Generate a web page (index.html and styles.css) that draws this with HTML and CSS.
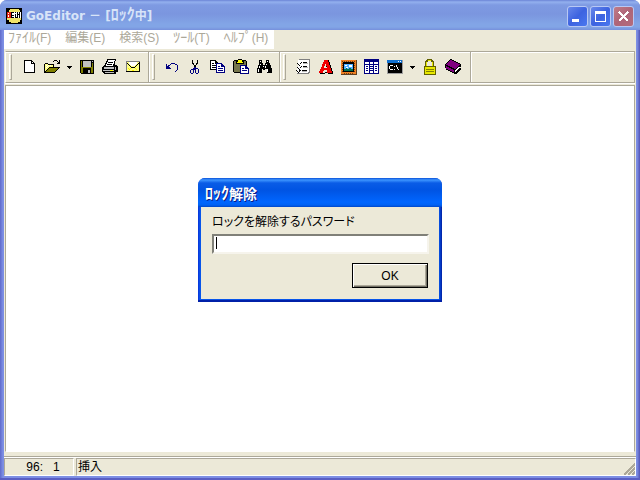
FILE: index.html
```html
<!DOCTYPE html>
<html lang="ja">
<head>
<meta charset="utf-8">
<title>GoEditor － [ﾛｯｸ中]</title>
<link rel="stylesheet" href="styles.css">
</head>
<body>
<div class="window">
  <header class="titlebar">
    <svg class="icon" viewBox="0 0 16 16"><path fill="#000" d="M0 0h16v16H0z"/><path fill="#f0e468" d="M4 1h9v1h1v2h1v8h-1v2h-2v1H5v-1H3v-2H1V4h2V2h1z"/><path fill="#fff" d="M5 4h10v6H5z"/><path fill="#e02010" d="M1 4h4v6H1z"/><path fill="#fff" d="M2 5h1v1H2zM2 7h1v2H2z"/><path fill="#000" d="M5 4h3v1H6v2h2v1H6v1h2v1H5zM9 6h1v4H9zM11 4h1v6h-1zM13 4h1v6h-1zM9 4h1v1H9zM10 9h1v1h-1zM12 6h1v1h-1z"/></svg>
    <h1 class="title">GoEditor － [<span class="kana">ﾛｯｸ</span>中]</h1>
    <div class="captions">
      <button class="caption" type="button" aria-label="最小化"><svg viewBox="0 0 19 19"><path fill="#fff" d="M4 12h7v3H4z"/></svg></button>
      <button class="caption" type="button" aria-label="最大化"><svg viewBox="0 0 19 19"><path fill="#fff" fill-rule="evenodd" d="M4 4h11v11H4zM5 7v7h9V7z"/></svg></button>
      <button class="caption caption-close" type="button" aria-label="閉じる"><svg viewBox="0 0 19 19"><path stroke="#fff" stroke-width="2.4" d="M5 5l9 9M14 5l-9 9"/></svg></button>
    </div>
  </header>
  <div class="client">
    <nav class="menubar">
      <button type="button"><span class="kana">ﾌｧｲﾙ</span>(F)</button>
      <button type="button">編集(E)</button>
      <button type="button">検索(S)</button>
      <button type="button"><span class="kana">ﾂｰﾙ</span>(T)</button>
      <button type="button"><span class="kana">ﾍﾙﾌﾟ</span>(H)</button>
    </nav>
    <div class="toolbar">
      <div class="band">
        <button class="tool" type="button" aria-label="新規"><svg class="icon" viewBox="0 0 16 16"><path fill="#000" d="M3 1h8v1h1v1h1v1h1v10H3z"/><path fill="#fff" d="M4 2h6v3h3v8H4z"/><path fill="#fff" d="M11 3h1v1h-1z"/></svg></button>
        <button class="tool" type="button" aria-label="開く"><svg class="icon" viewBox="0 0 16 16"><path fill="#000" d="M1 4h3v1h6v3h6v1h-1v1h-1v1h-1v1h-1v1h-1v1H0V5h1zM9 2h1V1h3v1h1v1h1V1h1v4h-3V4h1V3h-1V2h-3v1H9z"/><path fill="#ffff80" d="M1 5h3v1h5v2H5v1H4v1H3v1H2v1H1z"/><path fill="#fff" d="M2 6h1v1H2zM4 6h1v1H4zM6 6h1v1H6zM3 7h1v1H3zM2 8h1v1H2z"/><path fill="#808000" d="M5 9h9v1h-1v1h-1v1h-1v1H2v-1h1v-1h1v-1h1z"/></svg></button>
        <button class="drop" type="button" aria-label="履歴"><svg viewBox="0 0 5 3"><path d="M0 0h5v1H4v1H3v1H2V2H1V1H0z"/></svg></button>
        <button class="tool" type="button" aria-label="保存"><svg class="icon" viewBox="0 0 16 16"><path fill="#000" d="M1 1h14v14H2v-1H1z"/><path fill="#808000" d="M2 2h1v12H2zM13 4h1v10h-1zM3 8h10v1H3zM3 9h1v5H3zM12 8h1v6h-1z"/><path fill="#c0c0c0" d="M4 2h8v6H4zM13 2h1v1h-1zM9 11h2v3H9z"/></svg></button>
        <button class="tool" type="button" aria-label="印刷"><svg class="icon" viewBox="0 0 16 16"><path fill="#000" d="M5 0h9v2h-1v4h2v1h1v6h-2v2H2v-1H1v-1H0V8h1V7h1V6h1V4h1V2h1z"/><path fill="#fff" d="M6 1h7v1h-1v3h-1v2H4V5h1V3h1z"/><path fill="#000" d="M6 3h5v1H6zM5 5h5v1H5z"/><path fill="#c0c0c0" d="M2 8h10v2H2zM1 11h11v1H1zM13 8h1v3h-1zM3 13h9v1H3z"/><path fill="#ffff00" d="M8 11h3v1H8z"/></svg></button>
        <button class="tool" type="button" aria-label="メール"><svg class="icon" viewBox="0 0 16 16"><path fill="#808080" d="M1 2h14v1H2v9H1z"/><path fill="#000" d="M14 3h1v10H1v-1h13z"/><path fill="#ffff80" d="M2 3h12v9H2z"/><path fill="#fff" d="M4 3h8v2h-1v1h-1v1H6V6H5V5H4z"/><path fill="#000" d="M2 4h1v1H2zM3 5h1v1H3zM4 6h1v1H4zM5 7h1v1H5zM6 8h4v1H6zM10 7h1v1h-1zM11 6h1v1h-1zM12 5h1v1h-1zM13 4h1v1h-1z"/><path fill="#fff000" d="M5 9h1v1H5zM4 10h1v1H4zM10 9h1v1h-1zM11 10h1v1h-1zM7 11h2v1H7zM3 9h1v1H3z"/></svg></button>
      </div>
      <div class="band">
        <button class="tool" type="button" aria-label="元に戻す"><svg class="icon" viewBox="0 0 16 16"><path fill="#000080" d="M2 5h1v2h1V6h2V5h1V4h4v1h2v1h1v5h-1v1h-1v1h-1v-1h1v-1h1V6h-2V5H7v1H6v1H5v1h1v1h1v1H2z"/></svg></button>
        <button class="tool" type="button" aria-label="切り取り"><svg class="icon" viewBox="0 0 16 16"><path fill="#000" d="M5 1h1v3h1v2h2V4h1V1h1v4h-1v1H9v2H7V6H6V5H5z"/><path fill="#000080" fill-rule="evenodd" d="M7 8h2v1h2v1h1v4h-1v1H9v-1H8v-3H7v3H6v1H4v-1H3v-3h1v-1h2V9h1zM4 11v3h2v-3zM9 10v4h2v-4z"/></svg></button>
        <button class="tool" type="button" aria-label="コピー"><svg class="icon" viewBox="0 0 16 16"><path fill="#000" d="M0 1h6v1h1v1h1v1h1v7H0z"/><path fill="#fff" d="M1 2h4v3h3v5H1z"/><path fill="#000" d="M2 4h2v1H2zM2 6h4v1H2zM2 8h4v1H2z"/><path fill="#000080" d="M6 4h6v1h1v1h1v1h1v7H6z"/><path fill="#fff" d="M7 5h4v3h3v5H7z"/><path fill="#000080" d="M8 7h2v1H8zM8 9h5v1H8zM8 11h5v1H8z"/></svg></button>
        <button class="tool" type="button" aria-label="貼り付け"><svg class="icon" viewBox="0 0 16 16"><path fill="#000" d="M1 1h4V0h4v1h4v1h1v12H1v-1H0V2h1z"/><path fill="#77774d" d="M1 2h12v11H1z"/><path fill="#000" d="M3 2h8v3H3z"/><path fill="#ffff00" d="M5 1h4v2h1v1H4V3h1z"/><path fill="#000080" d="M7 6h6v1h1v1h1v1h1v6H7z"/><path fill="#fff" d="M8 7h4v3h3v4H8z"/><path fill="#000080" d="M9 9h2v1H9zM9 11h5v1H9z"/></svg></button>
        <button class="tool" type="button" aria-label="検索"><svg class="icon" viewBox="0 0 16 16"><path fill="#000" d="M3 1h3v3h1v2h2V4h1V1h3v3h1v2h1v3h1v5h-5v-4H9v1H7v-1H6v4H1V9h1V6h1z"/><path fill="#fff" d="M4 2h1v1H4zM4 5h1v1H4zM3 7h1v2H3zM2 10h1v3H2zM11 2h1v1h-1zM10 5h1v1h-1zM9 7h1v2H9zM11 10h1v3h-1zM7 7h1v1H7z"/></svg></button>
      </div>
      <div class="band">
        <button class="tool" type="button" aria-label="設定"><svg class="icon" viewBox="0 0 16 16"><path fill="#808080" d="M4 0h11v14h-1v1H2v-1h11V1H4z"/><path fill="#fff" d="M3 1h11v12h-1v1H2V8h1z"/><path fill="#b8b8b8" d="M8 4h5v1H8zM8 8h5v1H8zM7 12h5v1H7z"/><path fill="#000" d="M8 3h4v1H8zM8 7h4v1H8zM7 11h5v1H7zM2 4h1v1h1v1h1V4h1V3h1v1H6v1H5v2H4V6H3V5H2zM2 8h1v1h1v1h1V8h1V7h1v1H6v1H5v2H4v-1H3V9H2zM1 11h1v1h1v1h1v-2h2v1H5v1H4v1H3v-1H2v-1H1z"/></svg></button>
        <button class="tool" type="button" aria-label="フォント"><svg class="icon" viewBox="0 0 16 16"><path fill="#000" d="M8 1h3v2h1v3h1v3h1v3h1v3h-5v-2H7v2H2v-1h7z"/><path fill="#f00000" fill-rule="evenodd" d="M6 1h4v2h1v3h1v3h1v3h1v2H9v-3H6v1H5v2H1v-2h1v-2h1V8h1V5h1V3h1zM7 5v2H6v2h3V7H8V5z"/></svg></button>
        <button class="tool" type="button" aria-label="画像"><svg class="icon" viewBox="0 0 16 16"><path fill="#604020" d="M0 1h16v15H0z"/><path fill="#f08020" d="M0 1h15v14H0z"/><path fill="#704018" d="M1 2h1v1H1zM3 2h1v1H3zM5 2h1v1H5zM7 2h1v1H7zM9 2h1v1H9zM11 2h1v1h-1zM13 2h1v1h-1zM1 4h1v1H1zM1 6h1v1H1zM1 8h1v1H1zM1 10h1v1H1zM1 12h1v1H1zM13 4h1v1h-1zM13 6h1v1h-1zM13 8h1v1h-1zM13 10h1v1h-1zM13 12h1v1h-1zM3 14h1v1H3zM5 14h1v1H5zM7 14h1v1H7zM9 14h1v1H9zM11 14h1v1h-1z"/><path fill="#000" d="M2 3h11v10H2z"/><path fill="#50b0ff" d="M3 5h9v7H3z"/><path fill="#fff" d="M4 6h2v1H4zM8 6h3v2H8zM5 8h2v1H5z"/><path fill="#007050" d="M3 10h2V9h1v1h2V9h2v1h2v2H3z"/></svg></button>
        <button class="tool" type="button" aria-label="一覧"><svg class="icon" viewBox="0 0 16 16"><path fill="#000080" d="M0 0h15v15H0z"/><path fill="#fff" d="M1 3h13v11H1z"/><path fill="#000080" d="M5 3h1v11H5zM9 3h1v11H9zM1 5h13v1H1zM2 7h2v1H2zM2 9h2v1H2zM2 11h2v1H2zM6 7h3v1H6zM6 9h3v1H6zM6 11h3v1H6zM11 7h2v1h-2zM11 9h2v1h-2zM11 11h2v1h-2z"/></svg></button>
        <button class="tool" type="button" aria-label="コマンド"><svg class="icon" viewBox="0 0 16 16"><path fill="#a0a0a0" d="M0 1h16v14H0z"/><path fill="#1070d0" d="M0 1h15v3H0z"/><path fill="#fff" d="M11 2h1v1h-1zM13 2h1v1h-1z"/><path fill="#000" d="M1 4h14v10H1z"/><path fill="#fff" d="M3 6h3v1H3zM2 7h1v3H2zM3 10h3v1H3zM7 7h1v1H7zM7 10h1v1H7zM9 6h1v2H9zM10 8h1v2h-1zM11 10h1v1h-1z"/></svg></button>
        <button class="drop" type="button" aria-label="コマンド一覧"><svg viewBox="0 0 5 3"><path d="M0 0h5v1H4v1H3v1H2V2H1V1H0z"/></svg></button>
        <button class="tool" type="button" aria-label="ロック"><svg class="icon" viewBox="0 0 16 16"><path fill="#606000" fill-rule="evenodd" d="M5 0h5v1h1v1h1v5h2v9H2V7h1V2h1V1h1zM6 2v1H5v4h5V3H9V2z"/><path fill="#e8e800" d="M3 8h10v7H3zM4 3h1v4H4zM10 3h1v4h-1zM6 1h3v1H6z"/><path fill="#808000" d="M4 10h8v1H4zM4 12h8v1H4z"/></svg></button>
        <button class="tool" type="button" aria-label="ヘルプ"><svg class="icon" viewBox="0 0 16 16"><path fill="#000" d="M5 0h2v1h2v1h2v1h2v1h2v1h1v3h-1v1h1v2h-1v1h-1v1h-1v1h-1v1H9v-1H7v-1H5v-1H3v-1H1V9H0V5h1V4h1V3h1V2h1V1h1z"/><path fill="#800080" d="M5 1h2v1h2v1h2v1h2v1h2v1h-1v1h-1v1h-1v1h-1v1H9V9H7V8H5V7H3V6H1V5h1V4h1V3h1V2h1zM1 7h1v1h2v1h2v1h2v1h1v2H7v-1H5v-1H3v-1H1z"/><path fill="#fff" d="M10 11h1v-1h1V9h1V8h2v1h-1v1h-1v1h-1v1h-1v1h-1z"/></svg></button>
      </div>
    </div>
    <textarea class="editor" aria-label="本文" readonly></textarea>
    <footer class="statusbar">
      <div class="panel position">96:   1</div>
      <div class="panel mode">挿入</div>
      <svg class="sizegrip" viewBox="0 0 12 12"><path stroke="#aca899" stroke-width="2" d="M1 12L12 1M5 12l7-7M9 12l3-3"/></svg>
    </footer>
  </div>
  <div class="overlay">
    <form class="dialog" aria-labelledby="dialog-title">
      <h2 class="dialog-title" id="dialog-title"><span class="kana">ﾛｯｸ</span>解除</h2>
      <div class="dialog-body">
        <label for="password">ロックを解除するパスワード</label>
        <div class="field"><input id="password" type="password"><span class="caret"></span></div>
        <button class="ok" type="button">OK</button>
      </div>
    </form>
  </div>
</div>
</body>
</html>
```
FILE: styles.css
```css
*, ::before { box-sizing: border-box; }

body {
  margin: 0;
  background: #fff;
  font: 12px/16px "Liberation Sans", "Noto Sans CJK JP", sans-serif;
  color: #000;
}

button, input, textarea { font: inherit; color: inherit; margin: 0; }
button { border: 0; padding: 0; background: none; }
h1, h2 { margin: 0; }
svg { display: block; shape-rendering: crispEdges; }

.icon { width: 16px; height: 16px; flex: none; }

.window {
  position: relative;
  display: flex;
  flex-direction: column;
  min-height: 100vh;
  padding: 0 4px 4px;
  border-radius: 7px 7px 0 0;
  background: linear-gradient(90deg, #5f6acb, #7d8fe4 3px, #7d8fe4 calc(100% - 3px), #5254b4);
  box-shadow: inset 0 -2px #5a5fc4;
}

.titlebar {
  display: flex;
  align-items: center;
  gap: 4px;
  height: 30px;
  margin: 0 -4px;
  padding: 2px 6px 0;
  border-radius: 7px 7px 0 0;
  background: linear-gradient(#6b84d6, #93b0ee 2px, #7e9ae2 5px, #7b96df 14px, #82a5e6 24px, #82a5e6 27px, #7690dc);
}

.title {
  flex: 1;
  font: bold 12px/16px "DejaVu Sans", "Noto Sans CJK JP", sans-serif;
  color: #d8e4f8;
  white-space: nowrap;
}

.kana { font-size: 14px; line-height: 0; }
.title .kana, .dialog-title .kana { font-size: 16px; }

.captions { display: flex; gap: 2px; }

.caption {
  width: 21px;
  height: 21px;
  border: 1px solid #b8c8f4;
  border-radius: 3px;
  background: linear-gradient(135deg, #6888ea, #3d63e0 50%, #4a78f0);
}
.caption svg { width: 19px; height: 19px; }
.caption-close { background: linear-gradient(135deg, #c07c88, #ae6478 50%, #b46c7c); }

.client {
  flex: 1;
  display: flex;
  flex-direction: column;
  background: #ece9d8;
}

.menubar {
  align-self: flex-start;
  display: flex;
  gap: 14px;
  height: 19px;
  padding: 0 6px 3px 4px;
  background: #fff;
  color: #aca899;
}

.toolbar {
  display: flex;
  height: 32px;
  margin: 2px 1px 0;
  border: 1px solid #aca899;
  border-left-color: #fff;
  box-shadow: inset 0 1px #fff, 0 1px #fff;
}

.band {
  display: flex;
  align-items: center;
  padding: 0 4px 0 3px;
  border-right: 1px solid #aca899;
  box-shadow: 1px 0 #fff;
}
.band::before {
  content: "";
  width: 3px;
  height: 26px;
  margin-right: 5px;
  border: 1px solid #aca899;
  border-left-color: #fff;
  border-top-color: #fff;
}
.band:last-child { padding-right: 6px; }

.tool {
  display: grid;
  place-items: center;
  width: 23px;
  height: 22px;
}

.drop {
  display: grid;
  place-items: center;
  width: 12px;
  height: 22px;
}
.drop svg { width: 5px; height: 3px; }

.editor {
  flex: 1;
  display: block;
  width: auto;
  margin: 2px 1px 0;
  padding: 2px;
  border: 1px solid #aca899;
  border-bottom-color: #fff;
  background: #fff;
  resize: none;
  outline: none;
}

.statusbar {
  position: relative;
  display: flex;
  gap: 2px;
  height: 24px;
  padding-top: 6px;
  background: linear-gradient(#ece9d8 4px, #aca899 4px, #aca899 5px, #fff 5px, #fff 6px, #ece9d8 6px);
}

.panel {
  height: 18px;
  border: 1px solid #aca899;
  border-right-color: #fff;
  border-bottom-color: #fff;
  white-space: pre;
}
.position { width: 70px; text-align: center; padding-left: 8px; }
.mode { flex: 1; padding-left: 1px; }

.sizegrip {
  position: absolute;
  right: 1px;
  bottom: 1px;
  width: 12px;
  height: 12px;
}

.overlay {
  position: absolute;
  inset: 0;
  display: grid;
  place-items: center;
}

.dialog {
  padding: 0 3px 3px;
  border-radius: 7px 7px 0 0;
  background: linear-gradient(90deg, #0831d9, #0855ea 2px, #0855ea calc(100% - 3px), #001ea0);
  box-shadow: inset 0 -2px #0020a8;
}

.dialog-title {
  height: 29px;
  margin: 0 -3px;
  padding: 7px 7px 0;
  border-radius: 7px 7px 0 0;
  background: linear-gradient(#0a50d8, #3d95ff 2px, #0a5ce6 5px, #0054e3 12px, #0066ff 24px, #0062f4 27px, #0046c8);
  font: bold 14px/16px "Noto Sans CJK JP", sans-serif;
  color: #fff;
  text-shadow: 1px 1px #0a1883;
}

.dialog-body {
  display: grid;
  padding: 7px 10px 11px 11px;
  background: #ece9d8;
}

.dialog-body label { font-feature-settings: "palt"; }

.field { position: relative; margin-top: 4px; }
.field input {
  display: block;
  width: 217px;
  height: 20px;
  padding: 1px 3px;
  border: 2px solid;
  border-color: #808078 #f6f4ec #f6f4ec #808078;
  background: #fff;
  outline: none;
}
.caret {
  position: absolute;
  left: 4px;
  top: 3px;
  width: 1px;
  height: 12px;
  background: #000;
}

.ok {
  justify-self: end;
  width: 76px;
  height: 25px;
  margin: 9px 1px 0 0;
  border: 1px solid #000;
  background: #ece9d8;
  box-shadow: inset 1px 1px #fff, inset -1px -1px #716f64, inset -2px -2px #aca899;
}
```
